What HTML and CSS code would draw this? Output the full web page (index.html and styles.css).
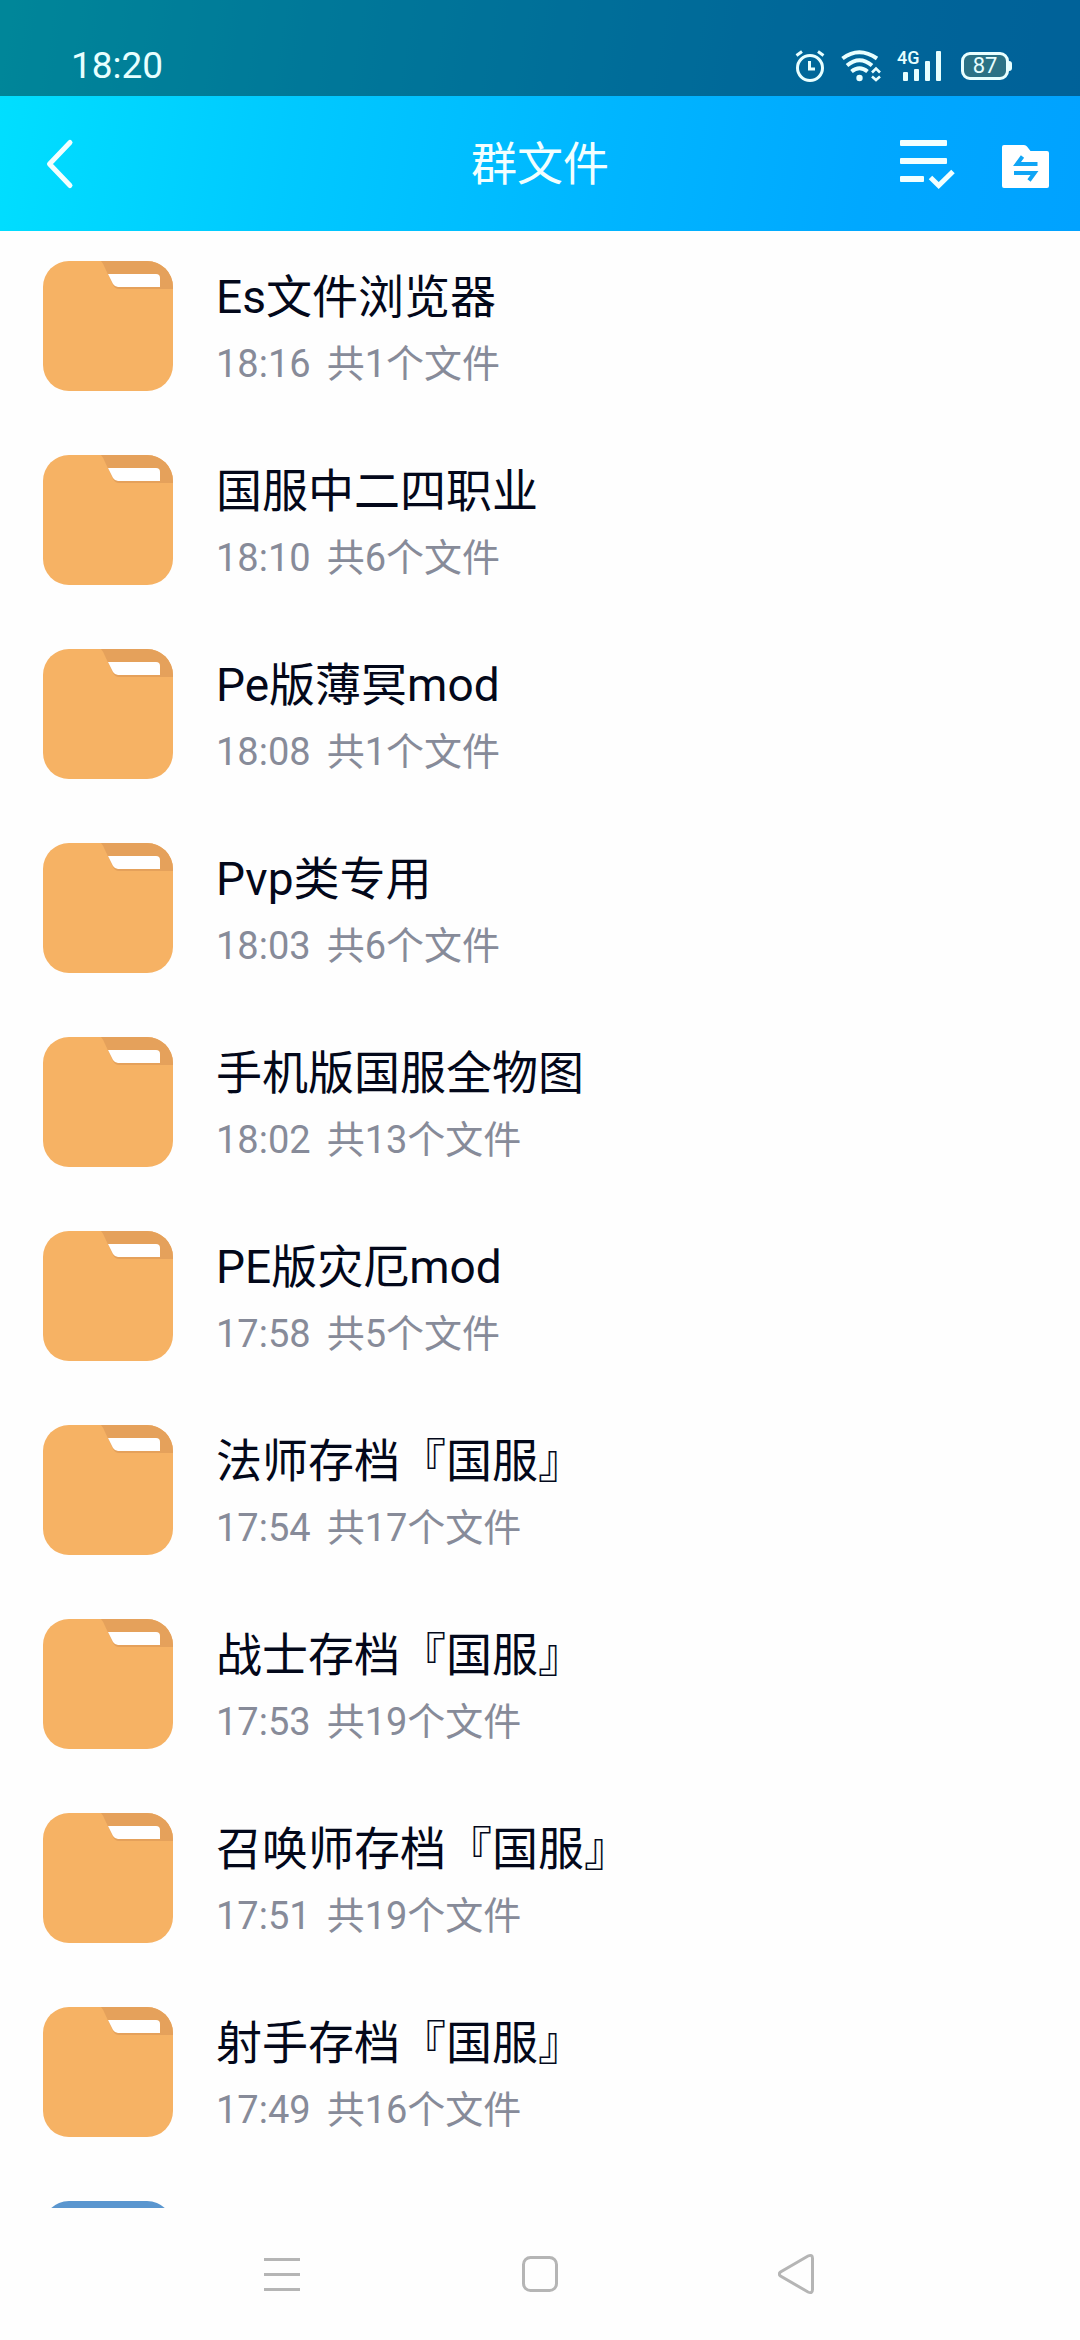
FILE: index.html
```html
<!DOCTYPE html>
<html lang="zh-CN">
<head>
<meta charset="utf-8">
<meta name="viewport" content="width=device-width, initial-scale=1">
<title>群文件</title>
<link rel="stylesheet" href="styles.css">
</head>
<body>
<svg class="defs" aria-hidden="true">
  <symbol id="folder" viewBox="0 0 130 130">
    <rect width="130" height="130" rx="26" fill="#f6b264"/>
    <path d="M58 0H104A26 26 0 0 1 130 26V28H76Q72 28 70 24L62 7Q60 2 58 0Z" fill="#e5a15b"/>
    <path d="M65 13H113Q117 13 117 17V26H75Q72 26 70 23Z" fill="#fff"/>
  </symbol>
</svg>
<div class="screen">
  <header class="top">
    <div class="status">
      <span class="clock">18:20</span>
      <div class="indicators">
        <svg width="30" height="32" viewBox="0 0 30 32" fill="none" stroke="#e8ffff" stroke-width="3">
          <circle cx="15" cy="18" r="12.5"/>
          <path d="M14.5 11V19H20M1.500 5.500L7 1.500M28.500 5.500L23 1.500"/>
        </svg>
        <svg width="40" height="32" viewBox="0 0 40 32" fill="none" stroke="#e8ffff" stroke-width="4">
          <path d="M1.500 8.500Q18 -4 36 8.500M6 15.500Q18.500 5 31 15.500M10.500 21.500Q18.500 15 26.500 21.500"/>
          <circle cx="18.500" cy="28" r="3.200" fill="#e8ffff" stroke="none"/>
          <path d="M31 22.500L35 18.500L39 22.500M31 26.500L35 30L39 26.500" stroke-width="2.600"/>
        </svg>
        <div class="signal">
          <span class="network">4G</span>
          <svg width="46" height="32" viewBox="0 0 46 32" fill="#e8ffff">
            <rect x="6" y="22" width="5" height="9" rx="1"/>
            <rect x="17" y="19" width="5" height="12" rx="1"/>
            <rect x="28" y="11" width="5" height="20" rx="1"/>
            <rect x="39" y="1" width="5" height="30" rx="1"/>
          </svg>
        </div>
        <div class="battery">87</div>
      </div>
    </div>
    <div class="bar">
      <button class="icon-button back" aria-label="返回">
        <svg width="28" height="52" viewBox="0 0 28 52" fill="none" stroke="#f2ffff" stroke-width="5" stroke-linecap="round" stroke-linejoin="round"><path d="M24 4.500L3.500 26L24 47.500"/></svg>
      </button>
      <h1 class="heading">群文件</h1>
      <div class="actions">
        <button class="icon-button" aria-label="多选">
          <svg width="56" height="52" viewBox="0 0 56 52" fill="#f2ffff">
            <rect y="2" width="47" height="6" rx="1"/>
            <rect y="20" width="47" height="6" rx="1"/>
            <rect y="38" width="24" height="6" rx="1"/>
            <path d="M30.500 39.500L38.700 47.500L53 33.500" fill="none" stroke="#f2ffff" stroke-width="5"/>
          </svg>
        </button>
        <button class="icon-button" aria-label="传输列表">
          <svg width="47" height="52" viewBox="0 0 47 52" fill="#fff">
            <path d="M2 7H22Q24 7 25 8.500L28.500 13H45Q47 13 47 15V48Q47 50 45 50H2Q0 50 0 48V9Q0 7 2 7Z"/>
            <path d="M35.500 26H15L20.500 18.500M12 35H32.500L27 42.500" fill="none" stroke="#10a5f5" stroke-width="4"/>
          </svg>
        </button>
      </div>
    </div>
  </header>
  <main class="list">
    <a class="row" href="#"><svg class="icon"><use href="#folder"/></svg><span class="text"><span class="name">Es文件浏览器</span><span class="info"><span>18:16</span><span>共1个文件</span></span></span></a>
    <a class="row" href="#"><svg class="icon"><use href="#folder"/></svg><span class="text"><span class="name">国服中二四职业</span><span class="info"><span>18:10</span><span>共6个文件</span></span></span></a>
    <a class="row" href="#"><svg class="icon"><use href="#folder"/></svg><span class="text"><span class="name">Pe版薄冥mod</span><span class="info"><span>18:08</span><span>共1个文件</span></span></span></a>
    <a class="row" href="#"><svg class="icon"><use href="#folder"/></svg><span class="text"><span class="name">Pvp类专用</span><span class="info"><span>18:03</span><span>共6个文件</span></span></span></a>
    <a class="row" href="#"><svg class="icon"><use href="#folder"/></svg><span class="text"><span class="name">手机版国服全物图</span><span class="info"><span>18:02</span><span>共13个文件</span></span></span></a>
    <a class="row" href="#"><svg class="icon"><use href="#folder"/></svg><span class="text"><span class="name">PE版灾厄mod</span><span class="info"><span>17:58</span><span>共5个文件</span></span></span></a>
    <a class="row" href="#"><svg class="icon"><use href="#folder"/></svg><span class="text"><span class="name">法师存档『国服』</span><span class="info"><span>17:54</span><span>共17个文件</span></span></span></a>
    <a class="row" href="#"><svg class="icon"><use href="#folder"/></svg><span class="text"><span class="name">战士存档『国服』</span><span class="info"><span>17:53</span><span>共19个文件</span></span></span></a>
    <a class="row" href="#"><svg class="icon"><use href="#folder"/></svg><span class="text"><span class="name">召唤师存档『国服』</span><span class="info"><span>17:51</span><span>共19个文件</span></span></span></a>
    <a class="row" href="#"><svg class="icon"><use href="#folder"/></svg><span class="text"><span class="name">射手存档『国服』</span><span class="info"><span>17:49</span><span>共16个文件</span></span></span></a>
    <a class="row" href="#" aria-label="文件"><span class="icon file"></span></a>
  </main>
  <nav class="nav">
    <button class="nav-button" aria-label="最近任务">
      <svg width="40" height="44" viewBox="0 0 40 44" fill="#b5b5b5"><path d="M2 6H38V9H2ZM2 21H38V24H2ZM2 36H38V39H2Z"/></svg>
    </button>
    <button class="nav-button" aria-label="主屏幕">
      <svg width="40" height="44" viewBox="0 0 40 44" fill="none" stroke="#b5b5b5" stroke-width="3"><rect x="3.500" y="5.500" width="33" height="33" rx="7"/></svg>
    </button>
    <button class="nav-button" aria-label="后退">
      <svg width="40" height="44" viewBox="0 0 40 44" fill="none" stroke="#b5b5b5" stroke-width="3"><path d="M2.500 20Q0 22 2.500 24L30 40Q34.500 42 34.500 37.500V6.500Q34.500 2 30 4Z"/></svg>
    </button>
  </nav>
</div>
</body>
</html>
```
FILE: styles.css
```css
* {
  box-sizing: border-box;
}

body {
  margin: 0;
  background: #fefefe;
  font-family: Roboto, "Noto Sans CJK SC", sans-serif;
}

button {
  padding: 0;
  border: 0;
  background: none;
}

svg {
  display: block;
}

.defs {
  position: absolute;
  width: 0;
  height: 0;
}

.screen {
  display: flex;
  flex-direction: column;
  height: 100vh;
}

.top {
  flex: none;
  color: #f2ffff;
  background: linear-gradient(100deg, #00e0ff 0%, #00c9ff 28%, #00b6ff 56%, #00a8ff 80%, #00a2ff 100%);
}

.status {
  display: flex;
  justify-content: space-between;
  height: 96px;
  padding: 36px 69px 0 71px;
  background: rgba(0, 0, 0, 0.4);
  color: #e8ffff;
}

.clock {
  font-size: 37px;
  line-height: 60px;
}

.indicators {
  display: flex;
  align-items: center;
  gap: 16px;
  height: 60px;
}

.signal {
  position: relative;
}

.network {
  position: absolute;
  left: 0;
  top: 0;
  font-size: 18px;
  font-weight: 500;
  line-height: 16px;
}

.battery {
  position: relative;
  width: 48px;
  height: 28px;
  margin: 0 2px;
  border: 3px solid #e8ffff;
  border-radius: 9px;
  background: #2b7285;
  font-size: 22px;
  line-height: 22px;
  text-align: center;
}

.battery::after {
  content: "";
  position: absolute;
  right: -6px;
  top: 6px;
  width: 3px;
  height: 10px;
  border-radius: 0 3px 3px 0;
  background: #e8ffff;
}

.bar {
  display: grid;
  grid-template-columns: 1fr auto 1fr;
  align-items: center;
  height: 135px;
  padding: 0 31px;
}

.icon-button {
  justify-self: start;
}

.back {
  padding-left: 15px;
}

.heading {
  margin: 0;
  font-size: 46px;
  font-weight: 400;
  line-height: 64px;
}

.actions {
  display: flex;
  justify-self: end;
  gap: 46px;
}

.list {
  flex: 1;
  min-height: 0;
  overflow-y: auto;
  scrollbar-width: none;
}

.row {
  display: flex;
  gap: 43px;
  height: 194px;
  padding: 30px 43px 0;
  color: #03081a;
  text-decoration: none;
}

.icon {
  flex: none;
  width: 130px;
  height: 130px;
}

.file {
  border-radius: 26px;
  background: #5a96cf;
}

.text {
  display: flex;
  flex-direction: column;
  min-width: 0;
}

.name {
  font-size: 46px;
  line-height: 72px;
}

.info {
  display: flex;
  gap: 16px;
  color: #878b99;
  font-size: 38px;
  line-height: 62px;
}

.nav {
  display: flex;
  flex: none;
  justify-content: center;
  height: 132px;
}

.nav-button {
  display: grid;
  flex: 0 1 258px;
  place-items: center;
}
```
